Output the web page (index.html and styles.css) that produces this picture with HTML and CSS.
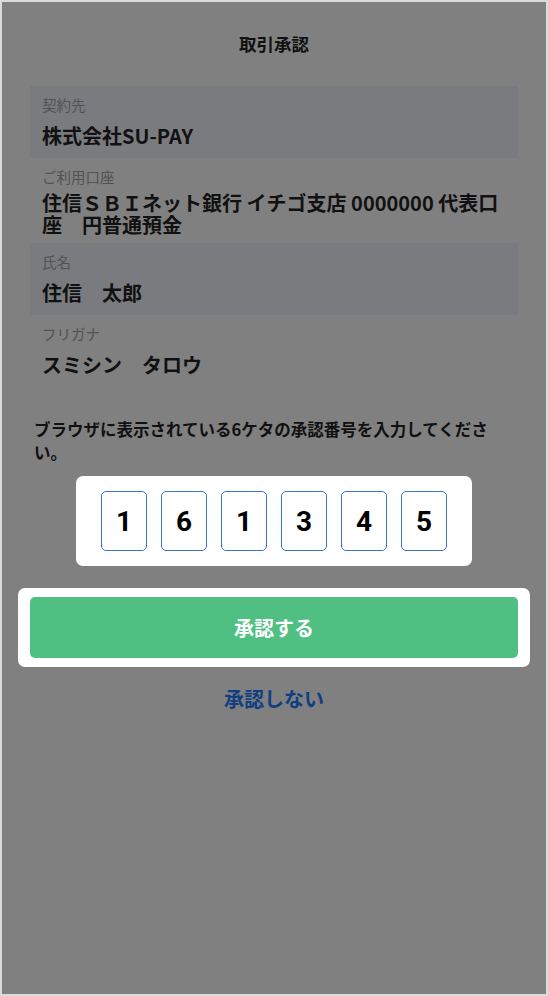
FILE: index.html
```html
<!DOCTYPE html>
<html lang="ja">

<head>
    <meta charset="UTF-8">
    <meta name="viewport" content="width=device-width, initial-scale=1.0">
    <title>取引承認</title>
    <link rel="stylesheet" href="styles.css">
</head>

<body>
    <div class="screen">
        <h1 class="title">取引承認</h1>

        <div class="details">
            <div class="row shaded">
                <div class="label">契約先</div>
                <div class="value">株式会社SU-PAY</div>
            </div>
            <div class="row">
                <div class="label">ご利用口座</div>
                <div class="value">住信ＳＢＩネット銀行 イチゴ支店 0000000 代表口座　円普通預金</div>
            </div>
            <div class="row shaded">
                <div class="label">氏名</div>
                <div class="value">住信　太郎</div>
            </div>
            <div class="row">
                <div class="label">フリガナ</div>
                <div class="value">スミシン　タロウ</div>
            </div>
        </div>

        <p class="guide">ブラウザに表示されている6ケタの承認番号を入力してください。</p>

        <div class="code-box highlight">
            <div class="digit">1</div>
            <div class="digit">6</div>
            <div class="digit">1</div>
            <div class="digit">3</div>
            <div class="digit">4</div>
            <div class="digit">5</div>
        </div>

        <div class="approve-wrap highlight">
            <button class="approve">承認する</button>
        </div>

        <a class="reject" href="#">承認しない</a>
    </div>
</body>

</html>
```

FILE: styles.css
```css
body {
    margin: 0;
    font-family: "Noto Sans CJK JP", sans-serif;
    color: #111111;
}

.screen {
    width: 548px;
    height: 996px;
    box-sizing: border-box;
    border: 2px solid #dcdcdc;
    background-color: #808080;
}

.title {
    margin: 0;
    padding-top: 30px;
    height: 54px;
    font-size: 17.5px;
    line-height: 24px;
    font-weight: bold;
    text-align: center;
}

.details {
    margin: 0 28px;
}

.row {
    padding: 10px 12px 7px;
}

/* filas con fondo azulado */
.row.shaded {
    background-color: #7a7b7f;
}

.label {
    font-size: 14.5px;
    line-height: 18px;
    color: #525252;
}

.value {
    margin-top: 6px;
    min-height: 31px;
    display: flex;
    align-items: center;
    font-size: 20px;
    line-height: 22px;
    font-weight: bold;
}

.guide {
    margin: 31px 46px 12px 32px;
    font-size: 16.5px;
    line-height: 23px;
    font-weight: bold;
}

.highlight {
    background-color: #ffffff;
    border-radius: 7px;
}

.code-box {
    width: 346px;
    margin: 0 auto;
    padding: 15px 25px;
    display: flex;
    gap: 14px;
}

.digit {
    width: 46px;
    height: 60px;
    box-sizing: border-box;
    border: 1.5px solid #3a78c2;
    border-radius: 5px;
    display: flex;
    align-items: center;
    justify-content: center;
    font-family: Roboto, sans-serif;
    font-size: 28px;
    font-weight: bold;
    color: #000000;
}

.approve-wrap {
    margin: 22px 16px 0;
    padding: 9px 12px;
}

.approve {
    display: block;
    width: 100%;
    height: 61px;
    border: 0;
    border-radius: 5px;
    background-color: #4fc082;
    color: #ffffff;
    font-family: "Noto Sans CJK JP", sans-serif;
    font-size: 20px;
    font-weight: bold;
    cursor: pointer;
}

.reject {
    display: block;
    margin-top: 20px;
    text-align: center;
    font-size: 20px;
    line-height: 24px;
    font-weight: bold;
    color: #0f3f80;
    text-decoration: none;
}
```
